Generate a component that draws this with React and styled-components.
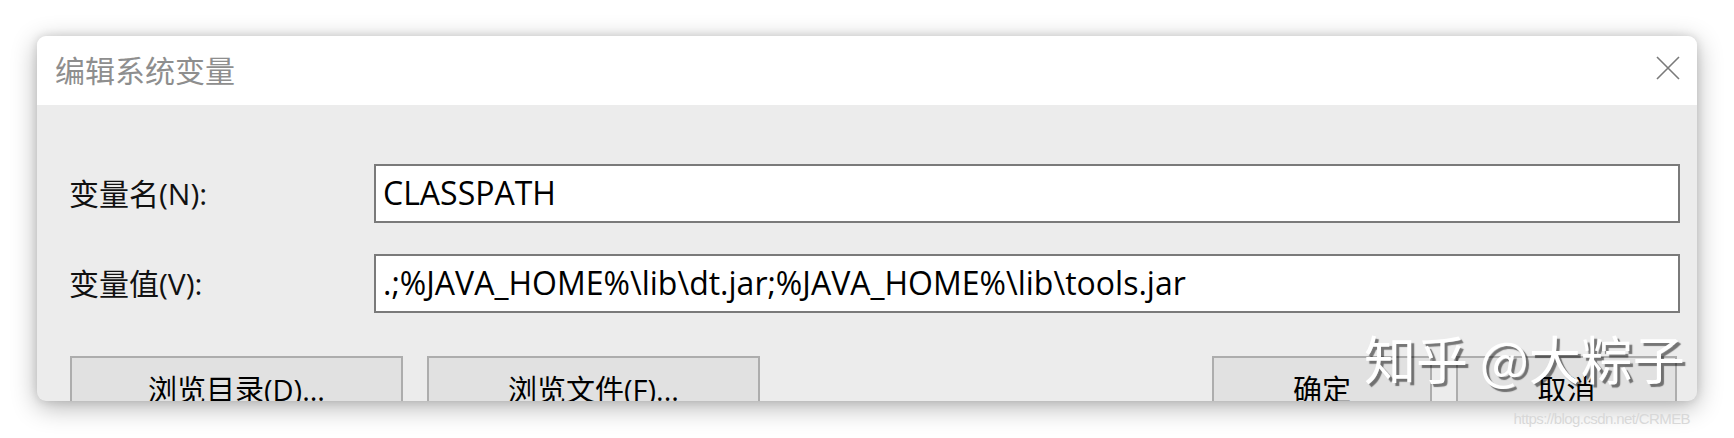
import React from "react";
import styled, { createGlobalStyle } from "styled-components";

const GlobalStyle = createGlobalStyle`
  html, body {
    margin: 0;
    padding: 0;
    background: #ffffff;
  }
  body {
    font-family: "Open Sans", "Noto Sans CJK SC", sans-serif;
  }
`;

const CloseIcon = () => (
  <svg width="24" height="24" viewBox="0 0 24 24">
    <path d="M1 1 L23 23 M23 1 L1 23" stroke="#7a7a7a" strokeWidth="1.6" fill="none" />
  </svg>
);

export default function App() {
  return (
    <>
      <GlobalStyle />
      <Stage>
        <Window>
          <TitleBar>
            <Title>编辑系统变量</Title>
            <CloseButton>
              <CloseIcon />
            </CloseButton>
          </TitleBar>
          <Body>
            <Fields>
              <Label>变量名(N):</Label>
              <Field readOnly defaultValue="CLASSPATH" />
              <Label>变量值(V):</Label>
              <Field readOnly defaultValue=".;%JAVA_HOME%\lib\dt.jar;%JAVA_HOME%\lib\tools.jar" />
            </Fields>
            <ButtonRow>
              <ButtonGroup>
                <Button $w={333}>浏览目录(D)...</Button>
                <Button $w={333}>浏览文件(F)...</Button>
              </ButtonGroup>
              <ButtonGroup>
                <Button $w={220}>确定</Button>
                <Button $w={221}>取消</Button>
              </ButtonGroup>
            </ButtonRow>
          </Body>
        </Window>
        <Watermark>知乎 @大粽子</Watermark>
        <SourceMark>https://blog.csdn.net/CRMEB</SourceMark>
      </Stage>
    </>
  );
}

const Stage = styled.div`
  position: relative;
  width: 1734px;
  height: 438px;
  padding: 36px 0 0 37px;
  box-sizing: border-box;
  overflow: hidden;
`;

const Window = styled.div`
  width: 1660px;
  height: 365px;
  border-radius: 9px;
  overflow: hidden;
  display: flex;
  flex-direction: column;
  background: #ececec;
  box-shadow: 0 6px 26px rgba(0, 0, 0, 0.3), 0 0 10px rgba(0, 0, 0, 0.12);
`;

const TitleBar = styled.div`
  height: 69px;
  flex: none;
  background: #ffffff;
  display: flex;
  align-items: center;
  justify-content: space-between;
  padding: 0 17px 0 18px;
`;

const Title = styled.div`
  font-family: "Noto Sans CJK SC", sans-serif;
  font-size: 30px;
  line-height: 1;
  color: #8e8e8e;
  margin-top: -4px;
`;

const CloseButton = styled.div`
  width: 24px;
  height: 24px;
  display: flex;
  margin-top: -6px;
`;

const Body = styled.div`
  flex: 1;
  padding: 59px 17px 0 32px;
  display: flex;
  flex-direction: column;
`;

const Fields = styled.div`
  display: grid;
  grid-template-columns: 305px 1fr;
  row-gap: 31px;
  align-items: center;
`;

const Label = styled.div`
  font-family: "Open Sans", "Noto Sans CJK SC", sans-serif;
  font-size: 30px;
  line-height: 1;
  color: #111;
`;

const Field = styled.input`
  height: 59px;
  box-sizing: border-box;
  border: 2px solid #7a7a7a;
  background: #ffffff;
  padding: 0 0 2px 7px;
  margin: 0;
  font-family: "Open Sans", "Noto Sans CJK SC", sans-serif;
  font-size: 32px;
  color: #000;
  outline: none;
  width: 100%;
`;

const ButtonRow = styled.div`
  margin: 43px 3px 0 1px;
  display: flex;
  justify-content: space-between;
`;

const ButtonGroup = styled.div`
  display: flex;
  gap: 24px;
`;

const Button = styled.div`
  width: ${(p) => p.$w}px;
  height: 64px;
  flex: none;
  box-sizing: border-box;
  border: 2px solid #adadad;
  background: #e1e1e1;
  display: flex;
  align-items: center;
  justify-content: center;
  font-family: "Open Sans", "Noto Sans CJK SC", sans-serif;
  font-size: 29px;
  color: #000;
`;

const Watermark = styled.div`
  position: absolute;
  left: 1364px;
  top: 329px;
  font-family: "Noto Sans CJK SC", sans-serif;
  font-size: 52px;
  line-height: 1.1;
  color: #ffffff;
  white-space: nowrap;
  text-shadow: 3px 3px 1px rgba(0, 0, 0, 0.5);
`;

const SourceMark = styled.div`
  position: absolute;
  right: 44px;
  top: 410px;
  font-family: "Liberation Sans", sans-serif;
  font-size: 15px;
  letter-spacing: -0.6px;
  color: #d8d8d8;
  white-space: nowrap;
`;
